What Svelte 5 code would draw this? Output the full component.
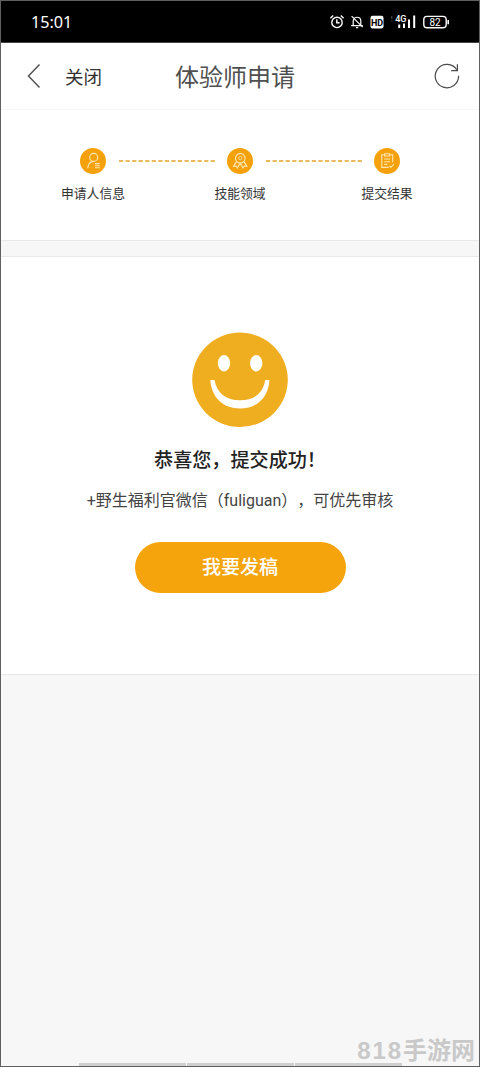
<script lang="ts">
  const steps = [
    { icon: 'person', label: '申请人信息' },
    { icon: 'medal', label: '技能领域' },
    { icon: 'form', label: '提交结果' }
  ];
</script>

<div class="screen" lang="zh-CN">
  <div class="status">
    <span class="time">15:01</span>
    <svg class="status-icons" width="122" height="18" viewBox="0 0 122 18" fill="none" stroke="#fff" stroke-width="1.4">
      <circle cx="8" cy="9.4" r="5.2" />
      <path d="M7.8 6.3v3.5h2.8M1.4 5.2l2.8-2.6M14.6 5.2l-2.8-2.6" />
      <path d="M24.2 12.2V8c0-5 7.6-5 7.6 0v4.2M22.2 12.6h11.6M22.6 3.2l11 11M27 14.6h2.2" stroke-width="1.2" />
      <rect x="41.5" y="2.8" width="13" height="12.6" rx="2" fill="#fff" stroke="none" />
      <text x="48" y="12.6" class="hd">HD</text>
      <path d="M62.8 3v3M62.8 7.5v1" stroke="#555" stroke-width="1" />
      <text x="71.8" y="8.8" class="net">4G</text>
      <path d="M70.2 11.5V15M75 10.500V15M80 6.6V15M85.2 2.6V15" stroke-width="2" />
      <rect x="94.8" y="3.4" width="22.4" height="11.4" rx="3.2" />
      <path d="M119.2 7v4.2" stroke-width="1.6" />
      <text x="106" y="12.6" class="battery">82</text>
    </svg>
  </div>

  <header class="nav">
    <svg class="back" width="14" height="26" viewBox="0 0 14 26" fill="none" stroke="#555" stroke-width="1.5">
      <path d="M12.5 1.5L1.5 13l11 11.5" />
    </svg>
    <span class="close">关闭</span>
    <h1>体验师申请</h1>
    <svg class="refresh" width="26" height="26" viewBox="0 0 26 26" fill="none" stroke="#4a4a4a" stroke-width="1.2">
      <path d="M24.6 12.8A11.7 11.7 0 1 1 22.8 6.8" />
      <path d="M23.4 1.2V7.6H17.2" />
    </svg>
  </header>

  <section class="steps">
    {#each steps as step, i}
      {#if i > 0}
        <svg class="line" width="96" height="2" viewBox="0 0 96 2">
          <path d="M0 1h96" stroke="#e3a32b" stroke-width="1.5" stroke-dasharray="4.2 2.35" />
        </svg>
      {/if}
      <div class="step">
        <svg width="26" height="26" viewBox="0 0 26 26" fill="none" stroke="#ffe7b4" stroke-width="1.1">
          <circle cx="13" cy="13" r="13" fill="#f5a10c" stroke="none" />
          {#if step.icon === 'person'}
            <circle cx="13.7" cy="9.4" r="4" />
            <path d="M7.8 20.2c.2-4 2-6.2 5.2-6.8M15 15.6h4.8M15 17.7h4.8M15 19.8h4.8" />
          {:else if step.icon === 'medal'}
            <circle cx="13.3" cy="10.2" r="4.8" />
            <circle cx="13.3" cy="10.2" r="1.6" stroke-width=".8" />
            <path d="M9.6 13.4l-3 4.8 2.5-.2 1.3 2 2.8-5 2.8 5 1.3-2 2.6.2-3.1-4.8" />
          {:else}
            <path d="M10.6 6.8H7.8v12.6h7M15.6 6.8h3.1v7.4" />
            <path d="M10.6 5.8h5v2.2h-5zM10.2 11h6M10.2 13.7h6M10.2 16.4h3.2M15.4 18l1.5 1.3 3-3.2" />
          {/if}
        </svg>
        <span>{step.label}</span>
      </div>
    {/each}
  </section>

  <main class="result">
    <svg class="smile" width="96" height="96" viewBox="0 0 96 96">
      <ellipse cx="48" cy="47.8" rx="47.8" ry="47.2" fill="#efae20" />
      <ellipse cx="32" cy="31.3" rx="6.2" ry="8.2" fill="#fff" />
      <ellipse cx="64.2" cy="31.3" rx="6.2" ry="8.2" fill="#fff" />
      <path d="M18.3 48h4.2C25 61.5 34 68.2 48 68.2S71 61.5 73.2 48h4.2C76.5 65.5 65 76.5 48 76.5S19.5 65.5 18.3 48z" fill="#fff" />
    </svg>
    <h2>恭喜您，提交成功！</h2>
    <p>+野生福利官微信（fuliguan），可优先审核</p>
    <button>我要发稿</button>
  </main>

  <div class="bottom">
    <div class="watermark"><span>818</span>手游网</div>
    <div class="bar"><i></i><i></i><i></i></div>
  </div>
</div>

<style>
  :global(body) {
    margin: 0;
  }

  .screen {
    box-sizing: border-box;
    width: 480px;
    height: 1067px;
    border: 1px solid #606060;
    background: #f7f7f7;
    display: flex;
    flex-direction: column;
    overflow: hidden;
    font-family: Roboto, 'Noto Sans CJK SC', sans-serif;
    text-spacing-trim: space-all;
    color: #333;
  }

  .status {
    height: 42px;
    flex: none;
    box-sizing: border-box;
    background: #000;
    border-bottom: 1px solid #444;
    color: #fff;
    display: flex;
    align-items: center;
    justify-content: space-between;
    padding: 0 28px 0 30px;
  }

  .time {
    font: 16.2px/20px 'Noto Sans', sans-serif;
  }

  .status-icons text {
    fill: #fff;
    stroke: none;
    text-anchor: middle;
    font-family: Roboto, sans-serif;
  }

  .status-icons .hd {
    fill: #000;
    font-size: 9px;
    font-weight: 700;
  }

  .status-icons .net {
    font-size: 9px;
    font-weight: 500;
  }

  .status-icons .battery {
    font-size: 10px;
  }

  .nav {
    height: 67px;
    flex: none;
    box-sizing: border-box;
    background: #fff;
    border-bottom: 1px solid #f7f7f7;
    display: grid;
    grid-template-columns: 38px 110px 1fr 26px;
    align-items: center;
    padding: 0 19px 0 26px;
  }

  .close {
    font-size: 18.5px;
  }

  h1 {
    margin: 4px 0 0;
    font-size: 24px;
    line-height: 34px;
    font-weight: 400;
    color: #505050;
  }

  .steps {
    height: 131px;
    flex: none;
    background: #fff;
    border-bottom: 1px solid #e9e9e9;
    display: flex;
    justify-content: center;
    align-items: flex-start;
    box-sizing: border-box;
    padding-top: 38px;
  }

  .step {
    width: 26px;
    display: flex;
    flex-direction: column;
    align-items: center;
    gap: 11px;
    font-size: 12.8px;
    line-height: 18px;
    white-space: nowrap;
  }

  .line {
    margin: 12px 12.5px 0;
  }

  .result {
    height: 419px;
    flex: none;
    box-sizing: border-box;
    margin-top: 15px;
    border-top: 1px solid #e9e9e9;
    border-bottom: 1px solid #e9e9e9;
    background: #fff;
    display: flex;
    flex-direction: column;
    align-items: center;
    padding-top: 75px;
  }

  h2 {
    margin: 18px 0 0;
    font-size: 19.1px;
    line-height: 30px;
    font-weight: 500;
    color: #222;
  }

  p {
    margin: 13px 0 0;
    font-size: 16px;
    line-height: 24px;
    white-space: nowrap;
    color: #444;
  }

  button {
    margin-top: 29px;
    width: 211px;
    height: 51px;
    border: 0;
    border-radius: 26px;
    background: #f6a40b;
    color: #fff;
    font: 500 19px/1 Roboto, 'Noto Sans CJK SC', sans-serif;
    padding: 0;
  }

  .bottom {
    flex: 1;
    display: flex;
    flex-direction: column;
    justify-content: flex-end;
  }

  .watermark {
    align-self: flex-end;
    margin: 0 4px -3px 0;
    color: #c9c9c9;
    font-size: 24px;
    line-height: 30px;
    font-weight: 700;
    white-space: nowrap;
  }

  .watermark span {
    font-family: 'Liberation Sans', sans-serif;
    letter-spacing: 1.9px;
  }

  .bar {
    width: 323px;
    height: 3px;
    margin: 0 auto;
    display: flex;
    gap: 1px;
  }

  .bar i {
    flex: 1;
    background: #cfcfcf;
  }
</style>
